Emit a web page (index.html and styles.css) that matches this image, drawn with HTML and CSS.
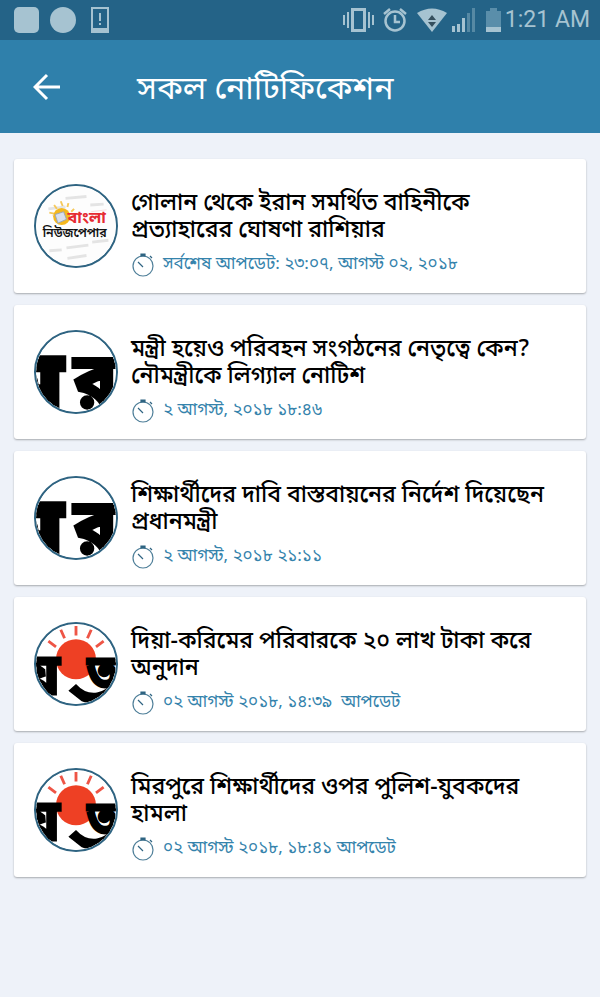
FILE: index.html
```html
<!DOCTYPE html>
<html lang="bn">
<head>
    <meta charset="UTF-8">
    <meta name="viewport" content="width=device-width, initial-scale=1">
    <title>সকল নোটিফিকেশন</title>
    <link rel="stylesheet" href="styles.css">
</head>
<body>
    <!-- shared icons -->
    <svg class="sprite" aria-hidden="true">
        <symbol id="icon-clock" viewBox="0 0 24 24">
            <circle cx="12" cy="13" r="10" fill="none" stroke="#4f7f99" stroke-width="1.2"/>
            <path d="M10 1h4v2h-4zM19 3l2 2M7 9l5 5" fill="#2f6482" stroke="#2f6482" stroke-width="1.2"/>
        </symbol>
        <symbol id="logo-news" viewBox="0 0 84 84">
            <circle cx="42" cy="42" r="42" fill="#fdfdfd"/>
            <g stroke="#e4e4e4" stroke-width="3">
                <path d="M31 13l22-2M13 24l18-2M57 20l14-1M32 65l23-3M14 68l13-1M59 59l17-2M33 76l20-3"/>
                <path d="M17 31l10-1M58 27l16-2" stroke="#f7dede" stroke-width="1"/>
            </g>
            <path d="M19 20l3 4M26 16l2 5M34 18l-1 4M40 24l-3 3M14 28l5 1" stroke="#f6c95b" stroke-width="2"/>
            <circle cx="27" cy="32" r="9" fill="#f4b81f"/>
            <path d="M20 30l9-3 3 8-9 4z" fill="#d9dfed" stroke="#9aa5b8"/>
            <text class="logo-red" x="33" y="39">বাংলা</text>
            <text class="logo-black" x="7" y="54">নিউজপেপার</text>
        </symbol>
        <symbol id="logo-samakal" viewBox="0 0 84 84">
            <clipPath id="round"><circle cx="42" cy="42" r="42"/></clipPath>
            <circle cx="42" cy="42" r="42" fill="#fff"/>
            <g clip-path="url(#round)">
                <text class="logo-huge" x="27" y="84" text-anchor="end">ম</text>
                <text class="logo-letter" x="40" y="76">র</text>
            </g>
        </symbol>
        <symbol id="logo-sun" viewBox="0 0 84 84">
            <circle cx="42" cy="42" r="42" fill="#fff"/>
            <g clip-path="url(#round)">
                <circle cx="42" cy="37" r="21" fill="#ee4024"/>
                <path d="M42 2v10M26 6l4 9M58 6l-4 9M13 18l8 6M71 18l-8 6" stroke="#ee5546" stroke-width="3"/>
                <path d="M34 70l8-7q10 11 22 9 10-2 16-10l4 12q-20 14-36 7z" fill="#000"/>
                <text class="logo-big" x="25" y="73" text-anchor="end">য</text>
                <text class="logo-small" x="54" y="66">ত</text>
            </g>
        </symbol>
    </svg>

    <div class="status-bar">
        <svg class="status-left" viewBox="0 0 112 40" aria-hidden="true">
            <rect x="14" y="7" width="25" height="26" rx="5"/>
            <circle cx="63" cy="20" r="13"/>
            <path fill-rule="evenodd" d="M91 7h18v26H91zM93 9v19h14V9z"/>
            <path d="M99 13h2v8h-2zM99 23h2v2h-2z"/>
        </svg>
        <svg class="status-right" viewBox="340 0 162 40" aria-hidden="true">
            <path fill-rule="evenodd" d="M350 8h15v24h-15zM353 11v18h9V11z"/>
            <path d="M342 15h2v10h-2zM346 12h2v16h-2zM367 12h2v16h-2zM371 15h2v10h-2z"/>
            <g fill="none" stroke="#a6c3d1" stroke-width="2.5">
                <circle cx="394" cy="21" r="9.5"/>
                <path d="M394 15v7h5M383 14l6-5M405 14l-6-5"/>
            </g>
            <path d="M416 13q15-9 30 0L431 32z"/>
            <path d="M427 20l4-5 4 5zM427 22l4 5 4-5z" fill="#354f5e"/>
            <path d="M451 26h3v6h-3zM456 24h3v8h-3zM461 18h3v14h-3z"/>
            <path d="M466 13h3v19h-3zM471 8h3v24h-3z" fill="#5689a4"/>
            <path d="M485 11h4V8h7v3h4v16h-15z" fill="#5a8eaa"/>
            <path d="M485 27h15v5h-15z"/>
        </svg>
        <span class="time">1:21 AM</span>
    </div>

    <header class="toolbar">
        <button class="back" type="button" aria-label="Back">
            <svg viewBox="0 0 28 28"><path d="M27 14H3M14 2L2 14l12 12"/></svg>
        </button>
        <h1>সকল নোটিফিকেশন</h1>
    </header>

    <main class="list">
        <a class="card" href="#">
            <svg class="logo"><use href="#logo-news"/></svg>
            <div class="info">
                <h2>গোলান থেকে ইরান সমর্থিত বাহিনীকে প্রত্যাহারের ঘোষণা রাশিয়ার</h2>
                <p><svg class="clock"><use href="#icon-clock"/></svg>সর্বশেষ আপডেট: ২৩:০৭, আগস্ট ০২, ২০১৮</p>
            </div>
        </a>
        <a class="card" href="#">
            <svg class="logo"><use href="#logo-samakal"/></svg>
            <div class="info">
                <h2>মন্ত্রী হয়েও পরিবহন সংগঠনের নেতৃত্বে কেন? নৌমন্ত্রীকে লিগ্যাল নোটিশ</h2>
                <p><svg class="clock"><use href="#icon-clock"/></svg>২ আগস্ট, ২০১৮ ১৮:৪৬</p>
            </div>
        </a>
        <a class="card" href="#">
            <svg class="logo"><use href="#logo-samakal"/></svg>
            <div class="info">
                <h2>শিক্ষার্থীদের দাবি বাস্তবায়নের নির্দেশ দিয়েছেন প্রধানমন্ত্রী</h2>
                <p><svg class="clock"><use href="#icon-clock"/></svg>২ আগস্ট, ২০১৮ ২১:১১</p>
            </div>
        </a>
        <a class="card" href="#">
            <svg class="logo"><use href="#logo-sun"/></svg>
            <div class="info">
                <h2>দিয়া-করিমের পরিবারকে ২০ লাখ টাকা করে অনুদান</h2>
                <p><svg class="clock"><use href="#icon-clock"/></svg>০২ আগস্ট ২০১৮, ১৪:৩৯&nbsp; আপডেট</p>
            </div>
        </a>
        <a class="card" href="#">
            <svg class="logo"><use href="#logo-sun"/></svg>
            <div class="info">
                <h2>মিরপুরে শিক্ষার্থীদের ওপর পুলিশ-যুবকদের হামলা</h2>
                <p><svg class="clock"><use href="#icon-clock"/></svg>০২ আগস্ট ২০১৮, ১৮:৪১ আপডেট</p>
            </div>
        </a>
    </main>
</body>
</html>
```
FILE: styles.css
```css
* {
    box-sizing: border-box;
}
body {
    margin: 0;
    min-height: 100vh;
    background-color: #eef2f9;
    font-family: "Noto Sans Bengali", "Noto Sans", sans-serif;
}
.sprite {
    position: absolute;
    width: 0;
    height: 0;
}
.status-bar {
    display: flex;
    align-items: center;
    height: 40px;
    padding-right: 10px;
    background-color: #246387;
    color: #a6c3d1;
    fill: #a6c3d1;
}
.status-left {
    width: 112px;
    height: 40px;
    margin-right: auto;
}
.status-right {
    width: 162px;
    height: 40px;
}
.time {
    margin-left: 2px;
    font-family: Roboto, sans-serif;
    font-size: 23px;
    line-height: 40px;
}
.toolbar {
    display: flex;
    align-items: center;
    height: 93px;
    padding-left: 33px;
    background-color: #2f80ab;
    color: #fff;
}
.back {
    width: 28px;
    height: 28px;
    padding: 0;
    border: 0;
    background: none;
}
.back svg {
    display: block;
    fill: none;
    stroke: #fff;
    stroke-width: 3;
}
.toolbar h1 {
    margin: 0 0 0 76px;
    padding-top: 8px;
    font-size: 32px;
    font-weight: 400;
    line-height: 40px;
}
.list {
    display: flex;
    flex-direction: column;
    gap: 12px;
    padding: 26px 14px;
}
.card {
    display: flex;
    gap: 13px;
    min-height: 134px;
    padding: 25px 20px 15px;
    border-radius: 3px;
    background-color: #fff;
    box-shadow: 0 1px 2px rgba(0,0,0,0.3);
    color: #000;
    text-decoration: none;
}
.logo {
    flex: none;
    width: 84px;
    height: 84px;
    border: 2px solid #2f6482;
    border-radius: 50%;
}
.info h2 {
    margin: 7px 0 0;
    font-size: 23px;
    font-weight: 500;
    line-height: 27px;
}
.info p {
    display: flex;
    align-items: center;
    gap: 8px;
    margin: 8px 0 0;
    color: #3583ac;
    font-size: 17px;
    line-height: 24px;
}
.clock {
    width: 24px;
    height: 24px;
}
.logo-red {
    fill: #e62b32;
    font-size: 17px;
    font-weight: 700;
}
.logo-black {
    fill: #111;
    font-size: 13px;
    font-weight: 600;
}
.logo-huge,
.logo-letter,
.logo-big,
.logo-small {
    font-weight: 700;
    stroke: #000;
}
.logo-huge {
    font-size: 88px;
    stroke-width: 8px;
}
.logo-letter {
    font-size: 74px;
    stroke-width: 4px;
}
.logo-big {
    font-size: 60px;
    stroke-width: 3px;
}
.logo-small {
    font-size: 46px;
    stroke-width: 3px;
}
```
